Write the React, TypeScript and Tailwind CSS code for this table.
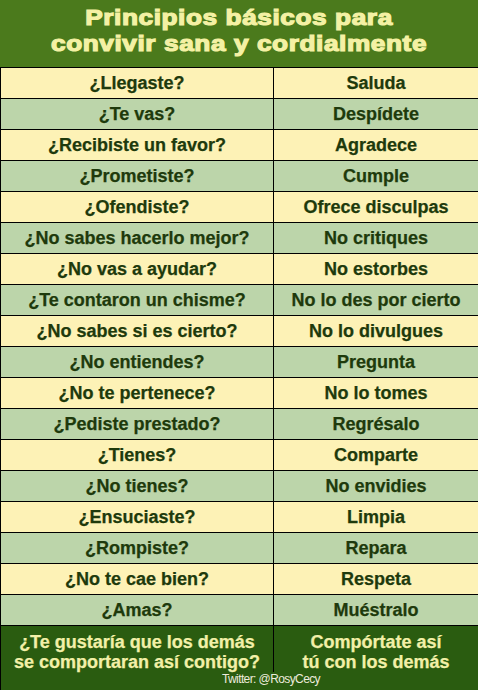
import React from "react";

const rows: [string, string][] = [
  ["¿Llegaste?", "Saluda"],
  ["¿Te vas?", "Despídete"],
  ["¿Recibiste un favor?", "Agradece"],
  ["¿Prometiste?", "Cumple"],
  ["¿Ofendiste?", "Ofrece disculpas"],
  ["¿No sabes hacerlo mejor?", "No critiques"],
  ["¿No vas a ayudar?", "No estorbes"],
  ["¿Te contaron un chisme?", "No lo des por cierto"],
  ["¿No sabes si es cierto?", "No lo divulgues"],
  ["¿No entiendes?", "Pregunta"],
  ["¿No te pertenece?", "No lo tomes"],
  ["¿Pediste prestado?", "Regrésalo"],
  ["¿Tienes?", "Comparte"],
  ["¿No tienes?", "No envidies"],
  ["¿Ensuciaste?", "Limpia"],
  ["¿Rompiste?", "Repara"],
  ["¿No te cae bien?", "Respeta"],
  ["¿Amas?", "Muéstralo"],
];

const App: React.FC = () => {
  return (
    <div className="w-[478px] h-[690px] overflow-hidden bg-[#2a5c10] font-['Liberation_Sans',Arial,sans-serif] font-bold">
      {/* titulo */}
      <div className="h-[67px] bg-[#4b7a1c] flex items-center justify-center pb-[5px]">
        <h1 className="text-center text-[#f4f1a4] text-[22px] leading-[26px] tracking-[0.5px] scale-x-[1.19] [-webkit-text-stroke:1.2px_#f4f1a4]">
          Principios básicos para
          <br />
          convivir sana y cordialmente
        </h1>
      </div>

      {/* tabla */}
      <div className="border-l border-black">
        {rows.map(([q, a], i) => (
          <div
            key={q}
            className={`grid grid-cols-[273px_1fr] h-[31px] border-t border-black text-[#1e3a0c] text-[18px] leading-[31px] [-webkit-text-stroke:0.25px_#1e3a0c] ${
              i % 2 === 0 ? "bg-[#fdf2b6]" : "bg-[#bcd5aa]"
            }`}
          >
            <div className="text-center border-r border-black">{q}</div>
            <div className="text-center">{a}</div>
          </div>
        ))}
      </div>

      {/* pie */}
      <div className="h-[65px] bg-[#2a5c10] border-t border-l border-black text-[#f2f0a8] text-[18px] leading-[20px] [-webkit-text-stroke:0.25px_#f2f0a8]">
        <div className="grid grid-cols-[273px_1fr] h-[46px]">
          <div className="text-center border-r border-black pt-[6px]">
            ¿Te gustaría que los demás
            <br />
            se comportaran así contigo?
          </div>
          <div className="text-center pt-[6px]">
            Compórtate así
            <br />
            tú con los demás
          </div>
        </div>
        <div className="text-center font-normal text-[12px] leading-[14px] pl-[63px] text-[#ecebdc] tracking-[-0.6px] [-webkit-text-stroke:0px] font-['Liberation_Sans_Narrow','Liberation_Sans',sans-serif]">
          Twitter: @RosyCecy
        </div>
      </div>
    </div>
  );
};

export default App;
